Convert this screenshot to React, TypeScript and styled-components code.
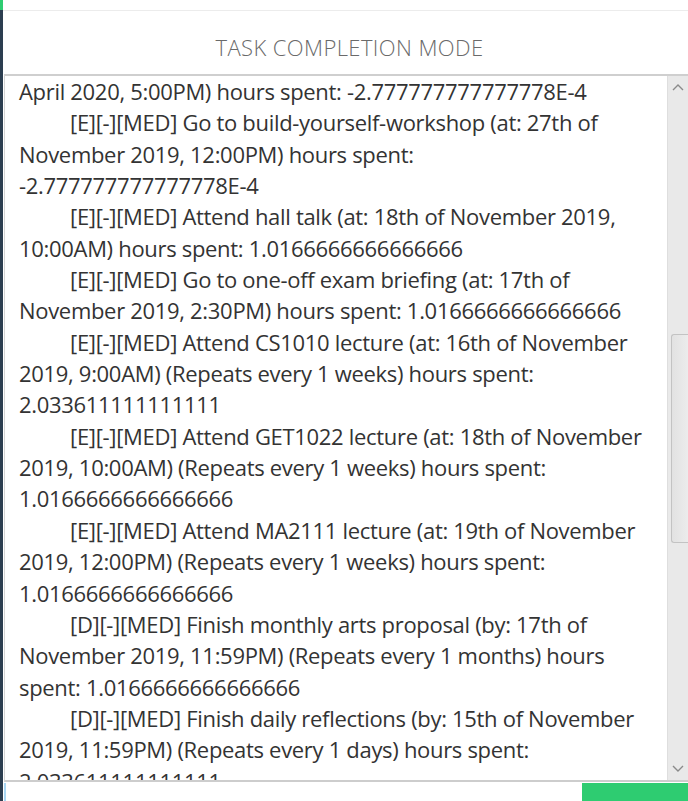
import React from "react";
import styled, { createGlobalStyle } from "styled-components";

const Global = createGlobalStyle`
  html, body { margin: 0; padding: 0; background: #ffffff; }
  body { width: 688px; height: 801px; overflow: hidden; }
  #root { height: 801px; }
`;

const Shell = styled.div`
  display: flex;
  height: 801px;
  width: 688px;
  overflow: hidden;
`;

const SideStrip = styled.div`
  width: 3px;
  flex: none;
  display: flex;
  flex-direction: column;
  background: #2c3e50;
`;

const SideAccent = styled.div`
  height: 10px;
  background: #2ecc71;
`;

const Main = styled.div`
  flex: 1;
  display: flex;
  flex-direction: column;
  min-width: 0;
`;

const TopBar = styled.div`
  height: 10px;
  border-bottom: 1px solid #ececec;
  flex: none;
`;

const TitleBar = styled.div`
  height: 63px;
  box-sizing: border-box;
  padding-top: 9px;
  flex: none;
  display: flex;
  align-items: center;
  justify-content: center;
  padding-left: 8px;
  font-family: "Open Sans", "Noto Sans", sans-serif;
  font-weight: 300;
  font-size: 22px;
  color: #6a6a6a;
  letter-spacing: 0.4px;
`;

const LogBox = styled.div`
  flex: 1;
  display: flex;
  min-height: 0;
  border-top: 2px solid #cfcfcf;
  border-left: 1px solid #d4d4d4;
  border-bottom: 2px solid #cdcdcd;
  margin-left: 1px;
`;

const LogViewport = styled.div`
  flex: 1;
  overflow: hidden;
  padding: 0 0 0 14px;
  font-family: "Open Sans", "Noto Sans", sans-serif;
  font-size: 22px;
  line-height: 31.35px;
  color: #333333;
  letter-spacing: -0.31px;
  white-space: nowrap;
`;

const Line = styled.div<{ $indent?: boolean }>`
  padding-left: ${(p) => (p.$indent ? "51px" : "0")};
`;

const ScrollBar = styled.div`
  width: 20px;
  flex: none;
  display: flex;
  flex-direction: column;
  background: #e9e9e9;
  border-left: 1px solid #dedede;
`;

const ArrowBtn = styled.div`
  height: 22px;
  flex: none;
  display: flex;
  align-items: center;
  justify-content: center;
`;

const Track = styled.div`
  flex: 1;
  display: flex;
  flex-direction: column;
  padding: 0 0 0 3px;
`;

const Thumb = styled.div`
  border: 1px solid #c3c3c3;
  border-right: none;
  border-radius: 3px 0 0 3px;
  background: linear-gradient(to right, #e2e2e2, #ececec);
`;

const InputRow = styled.div`
  height: 18px;
  flex: none;
  display: flex;
  margin-top: 1px;
`;

const CommandInput = styled.div`
  flex: 1;
  border-left: 2px solid #a9d6f2;
  margin-left: 1px;
  background: #ffffff;
`;

const SendButton = styled.div`
  width: 106px;
  background: #2ecc71;
`;

const Chevron = ({ up }: { up?: boolean }) => (
  <svg width="12" height="8" viewBox="0 0 12 8">
    <path
      d={up ? "M1 7 L6 2 L11 7" : "M1 1 L6 6 L11 1"}
      fill="none"
      stroke="#8a8a8a"
      strokeWidth="1.4"
    />
  </svg>
);

const lines: { t: string; i?: boolean }[] = [
  { t: "April 2020, 5:00PM) hours spent: -2.777777777777778E-4" },
  { t: "[E][-][MED] Go to build-yourself-workshop (at: 27th of", i: true },
  { t: "November 2019, 12:00PM) hours spent:" },
  { t: "-2.777777777777778E-4" },
  { t: "[E][-][MED] Attend hall talk (at: 18th of November 2019,", i: true },
  { t: "10:00AM) hours spent: 1.0166666666666666" },
  { t: "[E][-][MED] Go to one-off exam briefing (at: 17th of", i: true },
  { t: "November 2019, 2:30PM) hours spent: 1.0166666666666666" },
  { t: "[E][-][MED] Attend CS1010 lecture (at: 16th of November", i: true },
  { t: "2019, 9:00AM) (Repeats every 1 weeks) hours spent:" },
  { t: "2.033611111111111" },
  { t: "[E][-][MED] Attend GET1022 lecture (at: 18th of November", i: true },
  { t: "2019, 10:00AM) (Repeats every 1 weeks) hours spent:" },
  { t: "1.0166666666666666" },
  { t: "[E][-][MED] Attend MA2111 lecture (at: 19th of November", i: true },
  { t: "2019, 12:00PM) (Repeats every 1 weeks) hours spent:" },
  { t: "1.0166666666666666" },
  { t: "[D][-][MED] Finish monthly arts proposal (by: 17th of", i: true },
  { t: "November 2019, 11:59PM) (Repeats every 1 months) hours" },
  { t: "spent: 1.0166666666666666" },
  { t: "[D][-][MED] Finish daily reflections (by: 15th of November", i: true },
  { t: "2019, 11:59PM) (Repeats every 1 days) hours spent:" },
  { t: "2.033611111111111" },
];

const thumbTop = 236;
const thumbHeight = 207;

export default function App() {
  return (
    <>
      <Global />
      <Shell>
        <SideStrip>
          <SideAccent />
        </SideStrip>
        <Main>
          <TopBar />
          <TitleBar>TASK COMPLETION MODE</TitleBar>
          <LogBox>
            <LogViewport>
              {lines.map((l, k) => (
                <Line key={k} $indent={l.i}>
                  {l.t}
                </Line>
              ))}
            </LogViewport>
            <ScrollBar>
              <ArrowBtn>
                <Chevron up />
              </ArrowBtn>
              <Track>
                <Thumb style={{ marginTop: thumbTop, height: thumbHeight }} />
              </Track>
              <ArrowBtn>
                <Chevron />
              </ArrowBtn>
            </ScrollBar>
          </LogBox>
          <InputRow>
            <CommandInput />
            <SendButton />
          </InputRow>
        </Main>
      </Shell>
    </>
  );
}
